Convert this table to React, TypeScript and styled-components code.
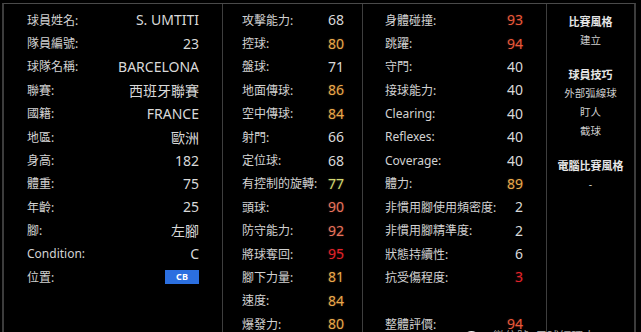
import React from "react";
import styled, {createGlobalStyle, css} from "styled-components";

const GlobalStyle = createGlobalStyle`
    html, body {
        margin: 0;
        padding: 0;
        background: #000;
    }
    body {
        width: 641px;
        height: 332px;
        overflow: hidden;
        font-family: "Noto Sans", "Noto Sans CJK TC", sans-serif;
    }
`

type Tone = "plain" | "gold" | "lime" | "salmon" | "red" | "hot";

const toneColor: Record<Tone, string> = {
    plain: "#d9d9d9",
    gold: "#eaa84a",
    lime: "#d3d872",
    salmon: "#e8735c",
    red: "#e3232a",
    hot: "#e9583a",
};

type Stat = { label: string; value?: string; tone?: Tone; badge?: boolean };

const profile: Stat[] = [
    {label: "球員姓名:", value: "S. UMTITI"},
    {label: "隊員編號:", value: "23"},
    {label: "球隊名稱:", value: "BARCELONA"},
    {label: "聯賽:", value: "西班牙聯賽"},
    {label: "國籍:", value: "FRANCE"},
    {label: "地區:", value: "歐洲"},
    {label: "身高:", value: "182"},
    {label: "體重:", value: "75"},
    {label: "年齡:", value: "25"},
    {label: "腳:", value: "左腳"},
    {label: "Condition:", value: "C"},
    {label: "位置:", value: "CB", badge: true},
];

const skills: Stat[] = [
    {label: "攻擊能力:", value: "68"},
    {label: "控球:", value: "80", tone: "gold"},
    {label: "盤球:", value: "71"},
    {label: "地面傳球:", value: "86", tone: "gold"},
    {label: "空中傳球:", value: "84", tone: "gold"},
    {label: "射門:", value: "66"},
    {label: "定位球:", value: "68"},
    {label: "有控制的旋轉:", value: "77", tone: "lime"},
    {label: "頭球:", value: "90", tone: "salmon"},
    {label: "防守能力:", value: "92", tone: "salmon"},
    {label: "將球奪回:", value: "95", tone: "red"},
    {label: "腳下力量:", value: "81", tone: "gold"},
    {label: "速度:", value: "84", tone: "gold"},
    {label: "爆發力:", value: "80", tone: "gold"},
];

const physical: Stat[] = [
    {label: "身體碰撞:", value: "93", tone: "hot"},
    {label: "跳躍:", value: "94", tone: "hot"},
    {label: "守門:", value: "40"},
    {label: "接球能力:", value: "40"},
    {label: "Clearing:", value: "40"},
    {label: "Reflexes:", value: "40"},
    {label: "Coverage:", value: "40"},
    {label: "體力:", value: "89", tone: "gold"},
    {label: "非慣用腳使用頻密度:", value: "2"},
    {label: "非慣用腳精準度:", value: "2"},
    {label: "狀態持續性:", value: "6"},
    {label: "抗受傷程度:", value: "3", tone: "red"},
    {label: ""},
    {label: "整體評價:", value: "94", tone: "hot"},
];

const Board = styled.div`
    position: relative;
    margin: 3px 0 0 2px;
    width: 634px;
    height: 329px;
    box-sizing: border-box;
    display: grid;
    grid-template-columns: 219px 140px 184px 1fr;
    border-top: 1px solid #4a4a4a;
    border-left: 2px solid #3c3c3c;
    border-right: 2px solid #3c3c3c;
`

const Column = styled.div<{ $padL: number; $padR: number }>`
    display: flex;
    flex-direction: column;
    padding: 4px ${p => p.$padR}px 0 ${p => p.$padL}px;
    border-right: 1px solid #3e3e3e;
    &:last-child {
        border-right: none;
    }
`

const Row = styled.div`
    height: 23.4px;
    display: flex;
    align-items: center;
    justify-content: space-between;
    white-space: nowrap;
`

const Label = styled.span`
    font-size: 12px;
    color: #d2d2d2;
`

const Value = styled.span<{ $tone: Tone }>`
    font-size: 14px;
    color: ${p => toneColor[p.$tone]};
    ${p => p.$tone !== "plain" && css`
        text-shadow: 0 0 2px ${toneColor[p.$tone]}55;
    `}
`

const Badge = styled.span`
    width: 34px;
    height: 14px;
    background: #2b6fe0;
    color: #fff;
    font-size: 9px;
    font-weight: 700;
    display: flex;
    align-items: center;
    justify-content: center;
`

const StyleColumn = styled.div`
    display: flex;
    flex-direction: column;
    align-items: center;
    padding-top: 8px;
`

const StyleGroup = styled.div`
    display: flex;
    flex-direction: column;
    align-items: center;
    margin-bottom: 15px;
`

const StyleHead = styled.div`
    font-size: 11px;
    font-weight: 700;
    color: #e6e6e6;
    line-height: 19px;
`

const StyleItem = styled.div`
    font-size: 10.5px;
    color: #cfcfcf;
    line-height: 19px;
`

const Watermark = styled.div`
    position: absolute;
    left: 460px;
    bottom: -12px;
    display: flex;
    align-items: center;
    gap: 14px;
    color: #a0a0a0;
    font-size: 12px;
    line-height: 14px;
`

const WeChatDot = styled.span`
    width: 15px;
    height: 13px;
    border-radius: 50%;
    background: #e8e8e8;
`

function StatColumn({rows, padL, padR}: { rows: Stat[]; padL: number; padR: number }) {
    return (
        <Column $padL={padL} $padR={padR}>
            {rows.map((r, i) => (
                <Row key={i}>
                    <Label>{r.label}</Label>
                    {r.badge ? (
                        <Badge>{r.value}</Badge>
                    ) : (
                        <Value $tone={r.tone ?? "plain"}>{r.value}</Value>
                    )}
                </Row>
            ))}
        </Column>
    )
}

export default function App() {
    return (
        <>
            <GlobalStyle/>
            <Board>
                <StatColumn rows={profile} padL={23} padR={23}/>
                <StatColumn rows={skills} padL={19} padR={18}/>
                <StatColumn rows={physical} padL={22} padR={23}/>
                <StyleColumn>
                    <StyleGroup>
                        <StyleHead>比賽風格</StyleHead>
                        <StyleItem>建立</StyleItem>
                    </StyleGroup>
                    <StyleGroup>
                        <StyleHead>球員技巧</StyleHead>
                        <StyleItem>外部弧線球</StyleItem>
                        <StyleItem>盯人</StyleItem>
                        <StyleItem>截球</StyleItem>
                    </StyleGroup>
                    <StyleGroup>
                        <StyleHead>電腦比賽風格</StyleHead>
                        <StyleItem>-</StyleItem>
                    </StyleGroup>
                </StyleColumn>
                <Watermark>
                    <WeChatDot/>
                    <span>微信號: 足球經理人</span>
                </Watermark>
            </Board>
        </>
    )
}
